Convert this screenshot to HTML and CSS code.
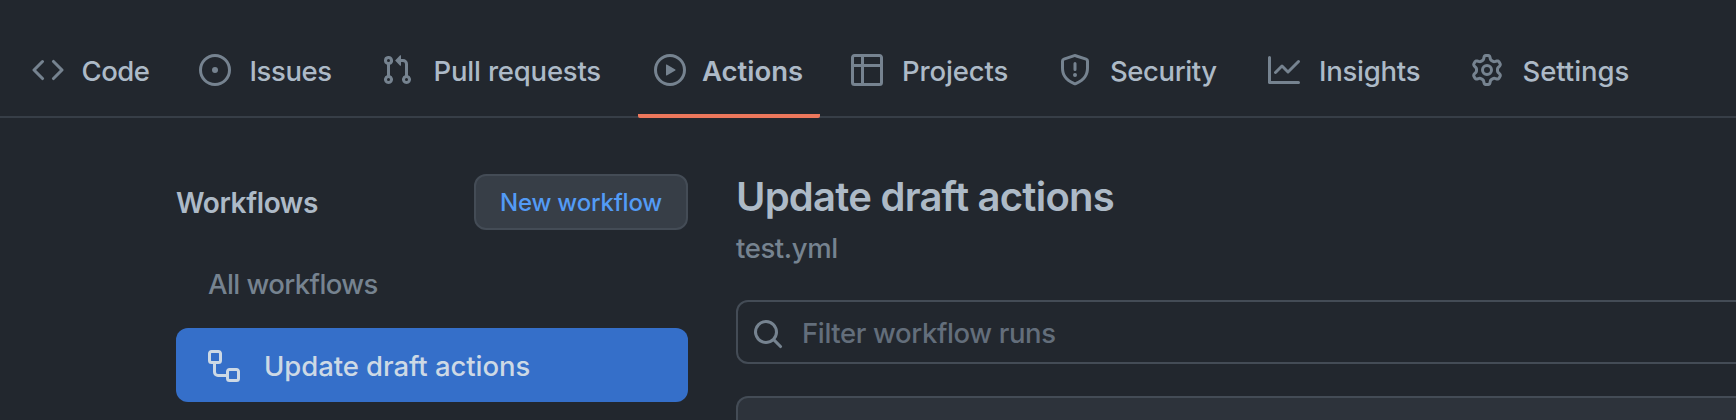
FILE: index.html
```html
<!DOCTYPE html>
<html lang="en">
<head>
<meta charset="utf-8">
<title>Update draft actions</title>
<link rel="stylesheet" href="styles.css">
</head>
<body>
<nav class="nav">
  <a class="tab"><svg class="icon" viewBox="0 0 16 16"><path d="M4.72 3.22a.75.75 0 011.06 1.06L2.06 8l3.72 3.72a.75.75 0 11-1.06 1.06L.47 8.53a.75.75 0 010-1.06l4.25-4.25zm6.56 0a.75.75 0 10-1.06 1.06L13.94 8l-3.72 3.72a.75.75 0 101.06 1.06l4.25-4.25a.75.75 0 000-1.06l-4.25-4.25z"/></svg><span class="label code">Code</span></a>
  <a class="tab"><svg class="icon" viewBox="0 0 16 16"><path d="M8 9.5a1.5 1.5 0 100-3 1.5 1.5 0 000 3z"/><path fill-rule="evenodd" d="M8 0a8 8 0 100 16A8 8 0 008 0zM1.5 8a6.5 6.5 0 1113 0 6.5 6.5 0 01-13 0z"/></svg><span class="label issues">Issues</span></a>
  <a class="tab"><svg class="icon" viewBox="0 0 16 16"><path fill-rule="evenodd" d="M7.177 3.073L9.573.677A.25.25 0 0110 .854v4.792a.25.25 0 01-.427.177L7.177 3.427a.25.25 0 010-.354zM3.75 2.5a.75.75 0 100 1.5.75.75 0 000-1.5zm-2.25.75a2.25 2.25 0 113 2.122v5.256a2.251 2.251 0 11-1.5 0V5.372A2.25 2.25 0 011.5 3.25zM11 2.5h-1V4h1a1 1 0 011 1v5.628a2.251 2.251 0 101.5 0V5A2.5 2.5 0 0011 2.5zm1 10.25a.75.75 0 111.5 0 .75.75 0 01-1.5 0zM3.75 12a.75.75 0 100 1.5.75.75 0 000-1.5z"/></svg><span class="label pulls">Pull requests</span></a>
  <a class="tab selected"><svg class="icon" viewBox="0 0 16 16"><path fill-rule="evenodd" d="M1.5 8a6.5 6.5 0 1113 0 6.5 6.5 0 01-13 0zM8 0a8 8 0 100 16A8 8 0 008 0zM6.379 5.227A.25.25 0 006 5.442v5.117a.25.25 0 00.379.214l4.264-2.559a.25.25 0 000-.428L6.379 5.227z"/></svg><span class="label actions">Actions</span></a>
  <a class="tab"><svg class="icon" viewBox="0 0 16 16"><path fill-rule="evenodd" d="M0 1.75C0 .784.784 0 1.75 0h12.5C15.216 0 16 .784 16 1.75v12.5A1.75 1.75 0 0114.25 16H1.75A1.75 1.75 0 010 14.25V1.75zM1.5 6.5v7.75c0 .138.112.25.25.25H5v-8H1.5zM5 5H1.5V1.75a.25.25 0 01.25-.25H5V5zm1.5 1.5v8h7.75a.25.25 0 00.25-.25V6.5h-8zm8-1.5h-8V1.5h7.75a.25.25 0 01.25.25V5z"/></svg><span class="label projects">Projects</span></a>
  <a class="tab"><svg class="icon" viewBox="0 0 16 16"><path fill-rule="evenodd" d="M7.467.133a1.75 1.75 0 011.066 0l5.25 1.68A1.75 1.75 0 0115 3.48V7c0 1.566-.32 3.182-1.303 4.682-.983 1.498-2.585 2.813-5.032 3.855a1.7 1.7 0 01-1.33 0c-2.447-1.042-4.049-2.357-5.032-3.855C1.32 10.182 1 8.566 1 7V3.48a1.75 1.75 0 011.217-1.667l5.25-1.68zm.61 1.429a.25.25 0 00-.153 0l-5.25 1.68a.25.25 0 00-.174.238V7c0 1.358.275 2.666 1.057 3.86.784 1.194 2.121 2.34 4.366 3.297a.2.2 0 00.154 0c2.245-.956 3.582-2.104 4.366-3.298C13.225 9.666 13.5 8.36 13.5 7V3.48a.25.25 0 00-.174-.237l-5.25-1.68zM8.75 4.75a.75.75 0 00-1.5 0v3a.75.75 0 001.5 0v-3zM9 10.5a1 1 0 11-2 0 1 1 0 012 0z"/></svg><span class="label security">Security</span></a>
  <a class="tab"><svg class="icon" viewBox="0 0 16 16"><path fill-rule="evenodd" d="M1.5 1.75a.75.75 0 00-1.5 0v12.5c0 .414.336.75.75.75h14.5a.75.75 0 000-1.5H1.5V1.75zm14.28 2.53a.75.75 0 00-1.06-1.06L10 7.94 7.53 5.47a.75.75 0 00-1.06 0L3.22 8.72a.75.75 0 001.06 1.06L7 7.06l2.47 2.47a.75.75 0 001.06 0l5.25-5.25z"/></svg><span class="label insights">Insights</span></a>
  <a class="tab"><svg class="icon" viewBox="0 0 16 16"><path fill-rule="evenodd" d="M8 0a8.2 8.2 0 0 1 .701.031C9.444.095 9.99.645 10.16 1.29l.288 1.107c.018.066.079.158.212.224.231.114.454.243.668.386.123.082.233.09.299.071l1.103-.303c.644-.176 1.392.021 1.82.63.27.385.506.792.704 1.218.315.675.111 1.422-.364 1.891l-.814.806c-.049.048-.098.147-.088.294.016.257.016.515 0 .772-.01.147.038.246.088.294l.814.806c.475.469.679 1.216.364 1.891a7.977 7.977 0 0 1-.704 1.217c-.428.61-1.176.807-1.82.63l-1.102-.302c-.067-.019-.177-.011-.3.071a5.909 5.909 0 0 1-.668.386c-.133.066-.194.158-.211.224l-.29 1.106c-.168.646-.715 1.196-1.458 1.26a8.006 8.006 0 0 1-1.402 0c-.743-.064-1.289-.614-1.458-1.26l-.289-1.106c-.018-.066-.079-.158-.212-.224a5.738 5.738 0 0 1-.668-.386c-.123-.082-.233-.09-.299-.071l-1.103.303c-.644.176-1.392-.021-1.82-.63a8.12 8.12 0 0 1-.704-1.218c-.315-.675-.111-1.422.363-1.891l.815-.806c.05-.048.098-.147.088-.294a6.214 6.214 0 0 1 0-.772c.01-.147-.038-.246-.088-.294l-.815-.806C.635 6.045.431 5.298.746 4.623a7.92 7.92 0 0 1 .704-1.217c.428-.61 1.176-.807 1.82-.63l1.102.302c.067.019.177.011.3-.071.214-.143.437-.272.668-.386.133-.066.194-.158.211-.224l.29-1.106C6.009.645 6.556.095 7.299.03 7.53.01 7.764 0 8 0Zm-.571 1.525c-.036.003-.108.036-.137.146l-.289 1.105c-.147.561-.549.967-.998 1.189-.173.086-.34.183-.5.29-.417.278-.97.423-1.529.27l-1.103-.303c-.109-.03-.175.016-.195.045-.22.312-.412.644-.573.99-.014.031-.021.11.059.19l.815.806c.411.406.562.957.53 1.456a4.709 4.709 0 0 0 0 .582c.032.499-.119 1.05-.53 1.456l-.815.806c-.081.08-.073.159-.059.19.162.346.353.677.573.989.02.03.085.076.195.046l1.102-.303c.56-.153 1.113-.008 1.53.27.161.107.328.204.501.29.447.222.85.629.997 1.189l.289 1.105c.029.109.101.143.137.146a6.6 6.6 0 0 0 1.142 0c.036-.003.108-.036.137-.146l.289-1.105c.147-.561.549-.967.998-1.189.173-.086.34-.183.5-.29.417-.278.97-.423 1.529-.27l1.103.303c.109.029.175-.016.195-.045.22-.313.411-.644.573-.99.014-.031.021-.11-.059-.19l-.815-.806c-.411-.406-.562-.957-.53-1.456a4.709 4.709 0 0 0 0-.582c-.032-.499.119-1.05.53-1.456l.815-.806c.081-.08.073-.159.059-.19a6.464 6.464 0 0 0-.573-.989c-.02-.03-.085-.076-.195-.046l-1.102.303c-.56.153-1.113.008-1.53-.27a4.44 4.44 0 0 0-.501-.29c-.447-.222-.85-.629-.997-1.189l-.289-1.105c-.029-.11-.101-.143-.137-.146a6.6 6.6 0 0 0-1.142 0ZM11 8a3 3 0 1 1-6 0 3 3 0 0 1 6 0ZM9.5 8a1.5 1.5 0 1 0-3.001.001A1.5 1.5 0 0 0 9.5 8Z"/></svg><span class="label settings">Settings</span></a>
</nav>
<div class="layout">
  <aside class="sidebar">
    <div class="sidebar-head">
      <h2 class="heading">Workflows</h2>
      <button class="new-button">New workflow</button>
    </div>
    <a class="all">All workflows</a>
    <a class="current"><svg class="icon" viewBox="0 0 16 16"><path fill-rule="evenodd" d="M0 1.75C0 .784.784 0 1.75 0h3.5C6.216 0 7 .784 7 1.75v3.5A1.75 1.75 0 015.25 7H4v4a1 1 0 001 1h4v-1.25C9 9.784 9.784 9 10.75 9h3.5c.966 0 1.75.784 1.75 1.75v3.5A1.75 1.75 0 0114.25 16h-3.5A1.75 1.75 0 019 14.25v-.75H5A2.5 2.5 0 012.5 11V7h-.75A1.75 1.75 0 010 5.25v-3.5zm1.75-.25a.25.25 0 00-.25.25v3.5c0 .138.112.25.25.25h3.5a.25.25 0 00.25-.25v-3.5a.25.25 0 00-.25-.25h-3.5zm9 9a.25.25 0 00-.25.25v3.5c0 .138.112.25.25.25h3.5a.25.25 0 00.25-.25v-3.5a.25.25 0 00-.25-.25h-3.5z"/></svg><span class="current-label">Update draft actions</span></a>
  </aside>
  <main class="main">
    <h1 class="title">Update draft actions</h1>
    <div class="file">test.yml</div>
    <div class="filter"><svg class="icon" viewBox="0 0 16 16"><path fill-rule="evenodd" d="M11.5 7a4.499 4.499 0 11-8.998 0A4.499 4.499 0 0111.5 7zm-.82 4.74a6 6 0 111.06-1.06l3.04 3.04a.75.75 0 11-1.06 1.06l-3.04-3.04z"/></svg><span class="placeholder">Filter workflow runs</span></div>
    <div class="runs"></div>
  </main>
</div>
</body>
</html>
```

FILE: styles.css
```css
* { box-sizing: border-box; }

body {
  margin: 0;
  height: 420px;
  overflow: hidden;
  background: #22272e;
  color: #adbac7;
  font: 450 27.5px/40px Inter, "Liberation Sans", sans-serif;
  white-space: nowrap;
}

.icon {
  flex: none;
  width: 32px;
  height: 32px;
  fill: #768390;
}

.nav {
  display: flex;
  gap: 16px;
  height: 118px;
  padding: 22px 16px 0;
  border-bottom: 2px solid #373e47;
}

.tab {
  display: flex;
  align-items: center;
  gap: 16px;
  height: 96px;
  padding: 0 16px;
  border-bottom: 4px solid transparent;
}

.tab .icon { margin-top: 4px; }
.label { margin-top: 6px; }

.selected {
  margin-right: -1px;
  border-radius: 2px;
  font-weight: 600;
  background: linear-gradient(#ec775c, #ec775c) 0 100% / 100% 4px no-repeat border-box;
}

.code { width: 71px; padding-left: 1.5px; letter-spacing: -0.5px; }
.issues { width: 86px; padding-left: 2.5px; letter-spacing: -0.4px; }
.pulls { width: 177px; padding-left: 4.5px; letter-spacing: -0.2px; }
.actions { width: 102px; }
.projects { width: 112px; padding-left: 3px; letter-spacing: -0.15px; }
.security { width: 113px; padding-left: 3px; letter-spacing: -0.4px; }
.insights { width: 107px; padding-left: 3px; letter-spacing: -0.25px; }
.settings { width: 113px; padding-left: 3.5px; letter-spacing: -0.05px; }

.layout {
  display: flex;
  gap: 48px;
  padding-left: 176px;
}

.sidebar {
  flex: none;
  width: 512px;
  padding-top: 56px;
}

.sidebar-head {
  display: flex;
  align-items: center;
  justify-content: space-between;
}

.heading {
  margin: 2px 0 0;
  font-size: 28px;
  font-weight: 600;
  letter-spacing: -0.38px;
}

.new-button {
  width: 214px;
  height: 56px;
  padding: 2px 0 0;
  border: 2px solid #444c56;
  border-radius: 12px;
  background: #373e47;
  color: #539bf5;
  font: 550 24px/40px Inter, "Liberation Sans", sans-serif;
  letter-spacing: -0.2px;
}

.all {
  display: block;
  margin: 34px 0 24px;
  padding-left: 32px;
  color: #768390;
  letter-spacing: -0.57px;
}

.current {
  display: flex;
  align-items: center;
  gap: 24px;
  height: 74px;
  padding: 1px 0 0 32px;
  border-radius: 12px;
  background: #356fc9;
  color: #cdd9e5;
  letter-spacing: -0.07px;
}

.current .icon { fill: #cdd9e5; }

.main {
  flex: 1;
  padding-top: 49px;
  min-width: 0;
}

.title {
  margin: 0;
  font-size: 40px;
  font-weight: 600;
  line-height: 60px;
  letter-spacing: -0.76px;
}

.file {
  margin-top: 1px;
  color: #768390;
  letter-spacing: -0.4px;
}

.filter {
  display: flex;
  align-items: center;
  gap: 18px;
  width: 1040px;
  height: 64px;
  margin-top: 32px;
  padding: 4px 14px 0;
  border: 2px solid #444c56;
  border-radius: 12px;
}

.placeholder {
  margin-top: -2px;
  color: #636e7b;
  letter-spacing: -0.38px;
}

.runs {
  width: 1040px;
  height: 24px;
  margin-top: 32px;
  border: 2px solid #444c56;
  border-bottom: 0;
  border-radius: 12px 12px 0 0;
  background: #2d333b;
}
```
